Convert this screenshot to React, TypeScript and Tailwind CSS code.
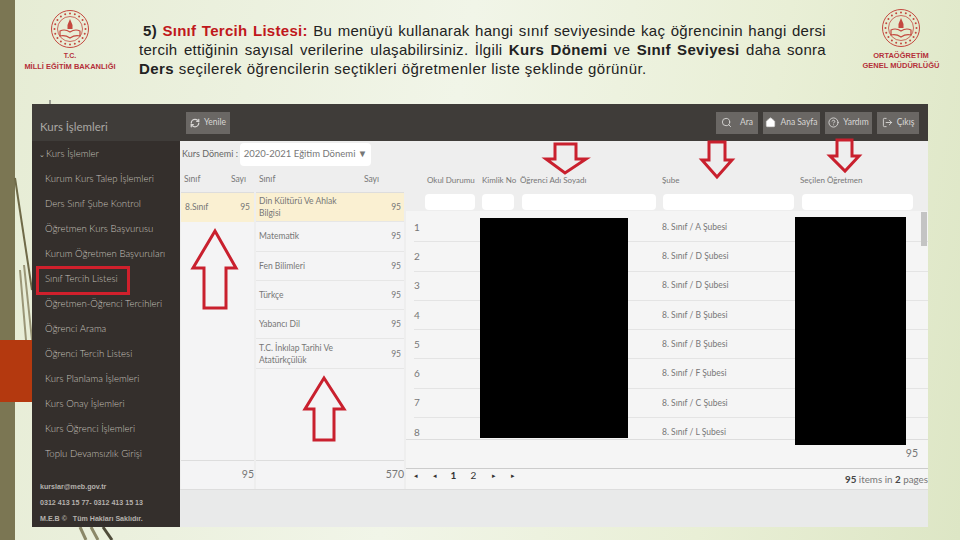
import { HelpCircle, Home, LogOut, RefreshCw, Search } from "lucide-react"

const menuItems = [
  "Kurum Kurs Talep İşlemleri",
  "Ders Sınıf Şube Kontrol",
  "Öğretmen Kurs Başvurusu",
  "Kurum Öğretmen Başvuruları",
  "Sınıf Tercih Listesi",
  "Öğretmen-Öğrenci Tercihleri",
  "Öğrenci Arama",
  "Öğrenci Tercih Listesi",
  "Kurs Planlama İşlemleri",
  "Kurs Onay İşlemleri",
  "Kurs Öğrenci İşlemleri",
  "Toplu Devamsızlık Girişi",
]

const lessons = [
  { name: "Din Kültürü Ve Ahlak Bilgisi", tall: true },
  { name: "Matematik" },
  { name: "Fen Bilimleri" },
  { name: "Türkçe" },
  { name: "Yabancı Dil" },
  { name: "T.C. İnkılap Tarihi Ve Atatürkçülük" },
]

const students = ["A", "D", "D", "B", "B", "F", "C", "L"]

function Logo() {
  const dots = Array.from({ length: 20 }, (_, i) => (i * Math.PI) / 10)
  return (
    <svg width="40" height="40" viewBox="0 0 40 40" fill="none" stroke="#c4483f">
      <circle cx="20" cy="20" r="18.5" strokeWidth="1" />
      <circle cx="20" cy="20" r="12.5" strokeWidth="0.8" />
      {dots.map((a, i) => (
        <circle key={i} cx={20 + 15.5 * Math.cos(a)} cy={20 + 15.5 * Math.sin(a)} r="1" fill="#c4483f" stroke="none" />
      ))}
      <path d="M20 10l2.5 6v4h-5v-4z" fill="#c4483f" stroke="none" />
      <path d="M10 22c4-2 7-1 10 1 3-2 6-3 10-1v5c-4-1-7 0-10 2-3-2-6-3-10-2z" strokeWidth="1.2" />
    </svg>
  )
}

function Arrow({ points }: { points: string }) {
  return (
    <svg className="absolute left-0 top-0" width="960" height="540" fill="none">
      <polygon points={points} stroke="#c9202e" strokeWidth="3" />
    </svg>
  )
}

function ToolButton({ width, children }: { width: string; children: React.ReactNode }) {
  return (
    <div className={`flex h-[22px] items-center justify-center gap-1 bg-[#6a6764] text-[8.5px] text-[#d8d6d4] ${width}`}>
      {children}
    </div>
  )
}

export default function App() {
  return (
    <div className="relative flex h-[540px] w-[960px] overflow-hidden bg-[linear-gradient(100deg,#e6ecd4_0%,#f1f5e8_45%,#e9efd6_75%,#dde6c5_100%)] font-['Lato',sans-serif]">
      {/* left strip of the slide */}
      <div className="w-[15px] shrink-0 bg-[#7b7653]" />
      <div className="absolute left-0 top-[340px] h-[62px] w-[32px] bg-[#b4390f]" />
      <svg className="absolute left-0 top-0" width="960" height="540" fill="none">
        <path d="M15 178L32 290" stroke="#6f6a48" strokeWidth="2" />
        <path d="M24 265L32 340M20 270L26 340" stroke="#9a9677" strokeWidth="2" />
        <path d="M50 100V104" stroke="#555" strokeWidth="1" />
        <path d="M80 527L86 540M91 527L98 540" stroke="#8b8868" strokeWidth="3" />
        <path d="M103 527L112 540" stroke="#4f4c3a" strokeWidth="3" />
      </svg>

      <div className="relative flex min-w-0 flex-1 flex-col">
        {/* slide header */}
        <header className="flex h-[104px] shrink-0">
          <div className="ml-[9px] flex w-[92px] flex-col items-center pt-[9px] font-['Liberation_Sans',sans-serif] font-bold text-[#b5303a]">
            <Logo />
            <span className="mt-[2px] text-[7px] leading-[9px]">T.C.</span>
            <span className="mt-[2px] whitespace-nowrap text-[7.5px] leading-[10px]">MİLLİ EĞİTİM BAKANLIĞI</span>
          </div>
          <div className="ml-[23px] mt-[21px] w-[687px] font-['Liberation_Sans',sans-serif] text-[15px] leading-[19px] tracking-[0.3px] text-[#222]">
            <p className="pl-1 [text-align-last:justify]">
              <b>5) </b>
              <b className="text-[#c0181c]">Sınıf Tercih Listesi:</b> Bu menüyü kullanarak hangi sınıf seviyesinde kaç öğrencinin hangi dersi
            </p>
            <p className="[text-align-last:justify]">
              tercih ettiğinin sayısal verilerine ulaşabilirsiniz. İlgili <b>Kurs Dönemi</b> ve <b>Sınıf Seviyesi</b> daha sonra
            </p>
            <p className="tracking-[0.45px]">
              <b>Ders</b> seçilerek öğrencilerin seçtikleri öğretmenler liste şeklinde görünür.
            </p>
          </div>
          <div className="ml-[36px] flex w-[78px] flex-col items-center pt-[8px] font-['Liberation_Sans',sans-serif] text-[7.5px] font-bold leading-[10px] text-[#b5303a]">
            <Logo />
            <span className="mt-[3px] whitespace-nowrap">ORTAÖĞRETİM</span>
            <span className="whitespace-nowrap">GENEL MÜDÜRLÜĞÜ</span>
          </div>
        </header>

        {/* application window */}
        <div className="ml-[17px] flex h-[423px] w-[896px] shrink-0">
          <aside className="flex w-[148px] shrink-0 flex-col bg-[#342f2c] text-[#c4c0bb]">
            <div className="flex h-[37px] items-center bg-[#3f3c39] pl-2 pt-[9px] text-[11.5px] text-[#aaa8a4]">Kurs İşlemleri</div>
            <div className="mt-px flex h-[25px] items-center pl-[7px] text-[9.6px] font-light">
              <span className="mr-px text-[7px]">⌄</span>Kurs İşlemler
            </div>
            {menuItems.map((item) => (
              <div key={item} className="flex h-[25px] shrink-0 items-center whitespace-nowrap pl-[13px] text-[9.6px] font-light">
                {item}
              </div>
            ))}
            <div className="mt-auto pl-2 font-['Liberation_Sans',sans-serif] text-[7.1px] font-bold leading-[16px] text-[#b5b1ac]">
              <div>kurslar@meb.gov.tr</div>
              <div>0312 413 15 77- 0312 413 15 13</div>
              <div>M.E.B ©&nbsp;&nbsp;&nbsp;Tüm Hakları Saklıdır.</div>
            </div>
          </aside>

          <main className="flex min-w-0 flex-1 flex-col bg-[#eeeeee]">
            <div className="flex h-[37px] shrink-0 items-center justify-between bg-[#3f3c39] pl-[6px] pr-[9px]">
              <ToolButton width="w-[44px]">
                <RefreshCw size={10} strokeWidth={3} />
                Yenile
              </ToolButton>
              <div className="flex gap-[5px]">
                <ToolButton width="w-[42px]">
                  <Search size={11} />
                  <span className="ml-1">Ara</span>
                </ToolButton>
                <ToolButton width="w-[57px]">
                  <Home size={11} fill="#fff" />
                  Ana Sayfa
                </ToolButton>
                <ToolButton width="w-[47px]">
                  <HelpCircle size={11} />
                  Yardım
                </ToolButton>
                <ToolButton width="w-[42px]">
                  <LogOut size={11} />
                  Çıkış
                </ToolButton>
              </div>
            </div>

            <div className="flex h-[26px] shrink-0 items-center pl-[2px] text-[9px] text-[#666]">
              <span className="w-[58px] whitespace-nowrap">Kurs Dönemi :</span>
              <div className="flex h-[23px] w-[131px] items-center justify-center rounded-sm bg-white text-[9.5px] text-[#777]">
                2020-2021 Eğitim Dönemi ▼
              </div>
            </div>

            <div className="flex h-[323px] shrink-0 gap-[2px] border-b border-[#ddd] pl-px text-[8.5px] text-[#777]">
              {/* class table */}
              <section className="flex w-[73px] flex-col bg-[#f4f4f5]">
                <div className="flex h-[26px] shrink-0 items-center justify-between border-b border-[#ddd] bg-[#eeeeee] pl-[3px] pr-[8px]">
                  <span>Sınıf</span>
                  <span>Sayı</span>
                </div>
                <div className="flex h-[29px] shrink-0 items-center justify-between bg-[#faf0d2] pl-[4px] pr-[4px]">
                  <span>8.Sınıf</span>
                  <span>95</span>
                </div>
                <div className="flex-1" />
                <div className="flex h-[29px] items-center justify-end border-t border-[#ddd] text-[10.5px]">95</div>
              </section>

              {/* lesson table */}
              <section className="flex w-[148px] flex-col bg-[#f4f4f5]">
                <div className="flex h-[26px] shrink-0 items-center justify-between border-b border-[#ddd] bg-[#eeeeee] pl-[3px] pr-[25px]">
                  <span>Sınıf</span>
                  <span>Sayı</span>
                </div>
                {lessons.map((l) => (
                  <div
                    key={l.name}
                    className={`flex h-[29.3px] shrink-0 items-center justify-between border-b border-[#e6e6e6] px-[3px] leading-[12px] ${l.tall ? "bg-[#faf0d2]" : ""}`}
                  >
                    <span className="w-[88px]">{l.name}</span>
                    <span>95</span>
                  </div>
                ))}
                <div className="flex-1" />
                <div className="flex h-[29px] items-center justify-end border-t border-[#ddd] text-[10.5px]">570</div>
              </section>

              {/* student table */}
              <section className="flex min-w-0 flex-1 flex-col bg-[#f5f5f5]">
                <div className="flex h-[26px] shrink-0 items-center bg-[#eeeeee] text-[8px]">
                  <span className="w-[15px]" />
                  <span className="w-[61px] whitespace-nowrap pl-[6px]">Okul Durumu</span>
                  <span className="w-[38px] whitespace-nowrap">Kimlik No</span>
                  <span className="w-[142px] whitespace-nowrap">Öğrenci Adı Soyadı</span>
                  <span className="w-[138px]">Şube</span>
                  <span className="whitespace-nowrap">Seçilen Öğretmen</span>
                </div>
                <div className="flex h-[18px] shrink-0 items-center bg-[#eeeeee] pl-[19px]">
                  <i className="h-[16px] w-[50px] rounded-sm bg-white" />
                  <i className="ml-[7px] h-[16px] w-[32px] rounded-sm bg-white" />
                  <i className="ml-[8px] h-[16px] w-[134px] rounded-sm bg-white" />
                  <i className="ml-[7px] h-[16px] w-[131px] rounded-sm bg-white" />
                  <i className="ml-[8px] h-[16px] w-[111px] rounded-sm bg-white" />
                </div>
                <div className="relative h-[228px] shrink-0 overflow-hidden pl-[8px] pt-[2px]">
                  {students.map((s, i) => (
                    <div key={i} className="flex h-[29.3px] items-center border-b border-[#e4e4e4] pr-[10px]">
                      <span className="w-[248px] text-[10px]">{i + 1}</span>
                      <span>8. Sınıf / {s} Şubesi</span>
                    </div>
                  ))}
                  <div className="absolute right-[1px] top-[1px] h-[34px] w-[6px] bg-[#c4c4c4]" />
                </div>
                <div className="flex h-[29px] shrink-0 items-center justify-end border-t border-[#ddd] pr-[10px] text-[10.5px]">95</div>
                <div className="flex h-[21px] shrink-0 items-center justify-between border-t border-[#ccc] text-[9.8px]">
                  <div className="flex items-center pb-[7px] text-[#333]">
                    <span className="w-[19px] text-center text-[7px]">◂</span>
                    <span className="w-[19px] text-center text-[7px]">◂</span>
                    <b className="w-[19px] text-center text-[10px]">1</b>
                    <span className="w-[21px] text-center text-[10px]">2</span>
                    <span className="w-[19px] text-center text-[7px]">▸</span>
                    <span className="w-[19px] text-center text-[7px]">▸</span>
                  </div>
                  <span className="whitespace-nowrap">
                    <b className="text-[#444]">95</b> items in <b className="text-[#444]">2</b> pages
                  </span>
                </div>
              </section>
            </div>

            <div className="flex-1 bg-[#e9eaea]" />
          </main>
        </div>
      </div>

      {/* annotations drawn over the screenshot */}
      <div className="absolute left-[36px] top-[266px] h-[29px] w-[94px] border-[3px] border-[#d0202c]" />
      <div className="absolute left-[480px] top-[218px] h-[220px] w-[148px] bg-black" />
      <div className="absolute left-[795px] top-[217px] h-[228px] w-[111px] bg-black" />
      <Arrow points="555,144 576,144 576,159 586,159 565,173 546,159 555,159" />
      <Arrow points="709,142 725,142 725,160 732,160 717,177 702,160 709,160" />
      <Arrow points="837,140 852,140 852,156 859,156 845,171 830,156 837,156" />
      <Arrow points="215,231 236,268 226,268 226,308 204,308 204,268 193,268" />
      <Arrow points="324,378 344,409 334,409 334,440 314,440 314,409 305,409" />
    </div>
  )
}
